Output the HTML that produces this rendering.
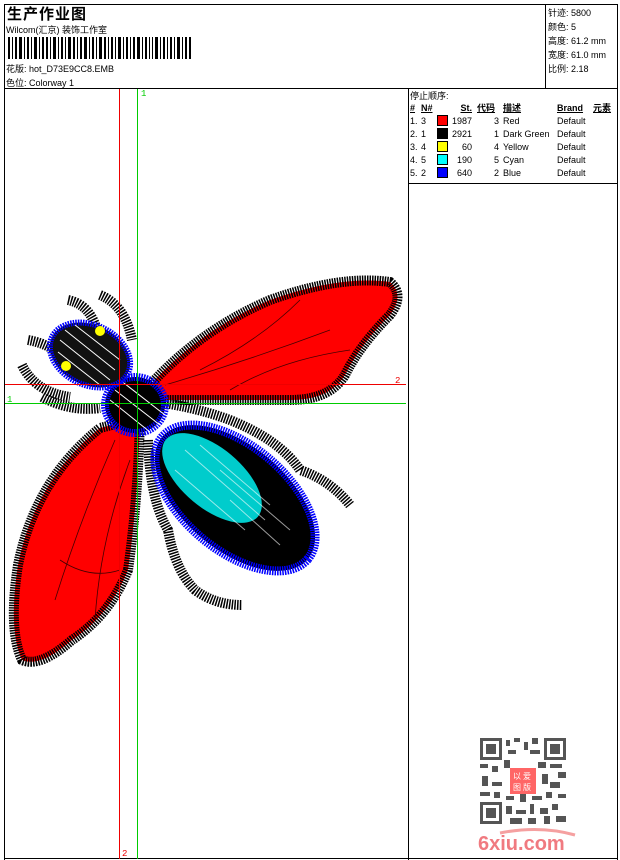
<!DOCTYPE html>
<html><head><meta charset="utf-8">
<style>
html,body{margin:0;padding:0;background:#fff;}
body{width:620px;height:860px;position:relative;overflow:hidden;font-family:"Liberation Sans","WenQuanYi Zen Hei","Noto Sans CJK SC",sans-serif;font-size:9px;color:#000;}
.a{position:absolute;}
.ln{position:absolute;background:#000;}
.t td{padding:0;height:13px;font-size:9px;white-space:nowrap;}
.sw{display:inline-block;width:9px;height:9px;border:1px solid #000;vertical-align:-2px;}
</style></head><body>
<div class="ln" style="left:4px;top:4px;width:614px;height:1px"></div>
<div class="ln" style="left:4px;top:4px;width:1px;height:856px"></div>
<div class="ln" style="left:617px;top:4px;width:1px;height:856px"></div>
<div class="ln" style="left:4px;top:88px;width:614px;height:1px"></div>
<div class="ln" style="left:545px;top:4px;width:1px;height:84px"></div>
<div class="ln" style="left:408px;top:88px;width:1px;height:772px"></div>
<div class="ln" style="left:408px;top:183px;width:210px;height:1px"></div>
<div class="ln" style="left:4px;top:858px;width:614px;height:1px"></div>

<div class="a" style="left:7px;top:3px;font-size:15px;font-weight:bold;letter-spacing:1px">生产作业图</div>
<div class="a" style="left:6px;top:23px">Wilcom(汇京) 装饰工作室</div>
<svg class="a" style="left:8px;top:37px" width="185" height="22">
<g fill="#000">
<rect x="0" y="0" width="2" height="22"/><rect x="4" y="0" width="1" height="22"/><rect x="7" y="0" width="2" height="22"/><rect x="11" y="0" width="3" height="22"/><rect x="16" y="0" width="1" height="22"/><rect x="19" y="0" width="2" height="22"/><rect x="23" y="0" width="1" height="22"/><rect x="26" y="0" width="3" height="22"/><rect x="31" y="0" width="1" height="22"/><rect x="34" y="0" width="2" height="22"/><rect x="38" y="0" width="2" height="22"/><rect x="42" y="0" width="1" height="22"/><rect x="45" y="0" width="3" height="22"/><rect x="50" y="0" width="1" height="22"/><rect x="53" y="0" width="2" height="22"/><rect x="57" y="0" width="1" height="22"/><rect x="60" y="0" width="3" height="22"/><rect x="65" y="0" width="2" height="22"/><rect x="69" y="0" width="1" height="22"/><rect x="72" y="0" width="2" height="22"/><rect x="76" y="0" width="3" height="22"/><rect x="81" y="0" width="1" height="22"/><rect x="84" y="0" width="2" height="22"/><rect x="88" y="0" width="1" height="22"/><rect x="91" y="0" width="3" height="22"/><rect x="96" y="0" width="2" height="22"/><rect x="100" y="0" width="1" height="22"/><rect x="103" y="0" width="2" height="22"/><rect x="107" y="0" width="1" height="22"/><rect x="110" y="0" width="3" height="22"/><rect x="115" y="0" width="1" height="22"/><rect x="118" y="0" width="2" height="22"/><rect x="122" y="0" width="1" height="22"/><rect x="125" y="0" width="2" height="22"/><rect x="129" y="0" width="3" height="22"/><rect x="134" y="0" width="1" height="22"/><rect x="137" y="0" width="2" height="22"/><rect x="141" y="0" width="1" height="22"/><rect x="144" y="0" width="1" height="22"/><rect x="147" y="0" width="3" height="22"/><rect x="152" y="0" width="1" height="22"/><rect x="155" y="0" width="2" height="22"/><rect x="159" y="0" width="1" height="22"/><rect x="162" y="0" width="2" height="22"/><rect x="166" y="0" width="1" height="22"/><rect x="169" y="0" width="3" height="22"/><rect x="174" y="0" width="1" height="22"/><rect x="177" y="0" width="2" height="22"/><rect x="181" y="0" width="2" height="22"/>
</g></svg>
<div class="a" style="left:6px;top:62px">花版: hot_D73E9CC8.EMB</div>
<div class="a" style="left:6px;top:76px">色位: Colorway 1</div>

<div class="a" style="left:548px;top:6px;line-height:14px">针迹: 5800<br>颜色: 5<br>高度: 61.2 mm<br>宽度: 61.0 mm<br>比例: 2.18</div>

<div class="a" style="left:410px;top:89px">停止顺序:</div>
<table class="t a" style="left:410px;top:101px;border-collapse:collapse">
<tr style="font-weight:bold;text-decoration:underline"><td style="width:11px">#</td><td style="width:30px">N#</td><td style="width:21px;text-align:right">St.</td><td style="width:26px;padding-left:5px">代码</td><td style="width:54px">描述</td><td style="width:36px">Brand</td><td>元素</td></tr>
<tr><td>1.</td><td>3 <span class="sw" style="background:#f00;margin-left:8px"></span></td><td style="text-align:right">1987</td><td style="text-align:right;padding-right:4px">3</td><td>Red</td><td>Default</td><td></td></tr>
<tr><td>2.</td><td>1 <span class="sw" style="background:#000;margin-left:8px"></span></td><td style="text-align:right">2921</td><td style="text-align:right;padding-right:4px">1</td><td>Dark Green</td><td>Default</td><td></td></tr>
<tr><td>3.</td><td>4 <span class="sw" style="background:#ff0;margin-left:8px"></span></td><td style="text-align:right">60</td><td style="text-align:right;padding-right:4px">4</td><td>Yellow</td><td>Default</td><td></td></tr>
<tr><td>4.</td><td>5 <span class="sw" style="background:#0ff;margin-left:8px"></span></td><td style="text-align:right">190</td><td style="text-align:right;padding-right:4px">5</td><td>Cyan</td><td>Default</td><td></td></tr>
<tr><td>5.</td><td>2 <span class="sw" style="background:#00f;margin-left:8px"></span></td><td style="text-align:right">640</td><td style="text-align:right;padding-right:4px">2</td><td>Blue</td><td>Default</td><td></td></tr>
</table>

<svg class="a" style="left:5px;top:89px" width="403" height="770" viewBox="5 89 403 770">
<g fill="none" stroke="#000" stroke-width="10" stroke-dasharray="1.5 1.2">
<path d="M68 300 Q92 305 98 335"/>
<path d="M100 295 Q125 305 132 340"/>
<path d="M28 340 Q55 345 65 362"/>
<path d="M22 365 Q35 392 70 397"/>
<path d="M42 397 Q70 412 100 408"/>
<path d="M140 400 Q190 405 230 420 Q280 440 300 470 Q330 480 350 505"/>
<path d="M148 440 Q150 500 168 530 Q175 570 195 590 Q215 605 242 605"/>
</g>
<path d="M150 385 Q200 330 270 300 Q340 275 390 282 Q405 295 390 315 Q360 345 345 375 Q330 400 290 400 Q220 400 160 400 Z" fill="#f00" stroke="#000" stroke-width="10" stroke-dasharray="1.5 1"/>
<path d="M165 385 Q250 360 330 330 M200 370 Q260 340 300 300 M230 390 Q280 360 350 350" stroke="#400" stroke-width="0.8" fill="none"/>
<path d="M140 418 Q138 500 128 570 Q110 615 72 640 Q40 668 22 660 Q8 630 18 565 Q35 480 100 428 Z" fill="#f00" stroke="#000" stroke-width="10" stroke-dasharray="1.5 1"/>
<path d="M115 440 Q80 520 55 600 M130 460 Q100 540 95 620 M60 560 Q90 580 120 570" stroke="#400" stroke-width="0.8" fill="none"/>
<ellipse cx="235" cy="498" rx="95" ry="52" transform="rotate(40 235 498)" fill="#000" stroke="#00f" stroke-width="9" stroke-dasharray="1.5 1"/>
<ellipse cx="212" cy="478" rx="60" ry="30" transform="rotate(40 212 478)" fill="#0cc"/>
<path d="M185 450 L265 520 M175 470 L245 530 M200 445 L270 505 M220 470 L290 530 M230 500 L280 545" stroke="#fff" stroke-width="1" opacity=".6"/>
<ellipse cx="135" cy="405" rx="30" ry="28" fill="#000" stroke="#00f" stroke-width="8" stroke-dasharray="1.5 1"/>
<path d="M115 390 L160 425 M110 400 L150 432 M120 380 L165 415" stroke="#fff" stroke-width="1"/>
<ellipse cx="90" cy="355" rx="42" ry="30" transform="rotate(25 90 355)" fill="#111" stroke="#00f" stroke-width="6" stroke-dasharray="1.5 1"/>
<path d="M60 340 L110 380 M65 330 L115 370 M75 325 L120 360 M58 352 L100 385" stroke="#fff" stroke-width="1"/>
<circle cx="100" cy="331" r="5" fill="#ff0"/>
<circle cx="66" cy="366" r="5" fill="#ff0"/>
<line x1="119.5" y1="89" x2="119.5" y2="859" stroke="#e00" stroke-width="1"/>
<line x1="137.5" y1="89" x2="137.5" y2="859" stroke="#0c0" stroke-width="1"/>
<line x1="5" y1="384.5" x2="406" y2="384.5" stroke="#e00" stroke-width="1"/>
<line x1="5" y1="403.5" x2="406" y2="403.5" stroke="#0c0" stroke-width="1"/>
<text x="141" y="96" fill="#0c0" font-size="9" font-family="Liberation Mono,monospace">1</text>
<text x="395" y="383" fill="#e00" font-size="9" font-family="Liberation Mono,monospace">2</text>
<text x="7" y="402" fill="#0c0" font-size="9" font-family="Liberation Mono,monospace">1</text>
<text x="122" y="856" fill="#e00" font-size="9" font-family="Liberation Mono,monospace">2</text>
</svg>

<svg class="a" style="left:480px;top:738px" width="86" height="86" viewBox="0 0 86 86">
<g fill="#555">
<rect x="0" y="0" width="22" height="22"/><rect x="64" y="0" width="22" height="22"/><rect x="0" y="64" width="22" height="22"/>
</g>
<g fill="#fff"><rect x="3" y="3" width="16" height="16"/><rect x="67" y="3" width="16" height="16"/><rect x="3" y="67" width="16" height="16"/></g>
<g fill="#555"><rect x="6" y="6" width="10" height="10"/><rect x="70" y="6" width="10" height="10"/><rect x="6" y="70" width="10" height="10"/>
<rect x="26" y="2" width="4" height="6"/><rect x="34" y="0" width="6" height="4"/><rect x="44" y="4" width="4" height="8"/><rect x="52" y="0" width="6" height="6"/><rect x="28" y="12" width="8" height="4"/><rect x="50" y="12" width="10" height="4"/>
<rect x="0" y="26" width="8" height="4"/><rect x="12" y="28" width="6" height="6"/><rect x="24" y="22" width="6" height="8"/><rect x="58" y="24" width="8" height="6"/><rect x="70" y="26" width="12" height="4"/><rect x="78" y="34" width="8" height="6"/>
<rect x="2" y="38" width="6" height="10"/><rect x="12" y="44" width="10" height="4"/><rect x="62" y="36" width="6" height="10"/><rect x="70" y="44" width="10" height="6"/>
<rect x="0" y="54" width="10" height="4"/><rect x="14" y="54" width="6" height="6"/><rect x="26" y="58" width="8" height="4"/><rect x="40" y="56" width="6" height="8"/><rect x="52" y="58" width="10" height="4"/><rect x="66" y="54" width="6" height="6"/><rect x="78" y="56" width="8" height="4"/>
<rect x="26" y="68" width="6" height="8"/><rect x="36" y="72" width="10" height="4"/><rect x="50" y="66" width="4" height="10"/><rect x="60" y="70" width="8" height="6"/><rect x="72" y="66" width="6" height="6"/><rect x="30" y="80" width="12" height="6"/><rect x="48" y="80" width="8" height="6"/><rect x="64" y="78" width="6" height="8"/><rect x="76" y="78" width="10" height="6"/></g>
<rect x="30" y="30" width="26" height="26" fill="#f66"/>
<text x="33" y="41" font-size="8" fill="#fff">以</text><text x="43" y="41" font-size="8" fill="#fff">爱</text>
<text x="33" y="52" font-size="8" fill="#fff">图</text><text x="43" y="52" font-size="8" fill="#fff">版</text>
</svg>
<svg class="a" style="left:470px;top:825px" width="110" height="30">
<path d="M30 8 Q70 0 105 10" stroke="#f5a0a0" stroke-width="3" fill="none"/>
<text x="8" y="25" font-family="Liberation Sans,sans-serif" font-weight="bold" font-size="20" fill="#f07a80">6xiu.com</text>
</svg>
</body></html>
